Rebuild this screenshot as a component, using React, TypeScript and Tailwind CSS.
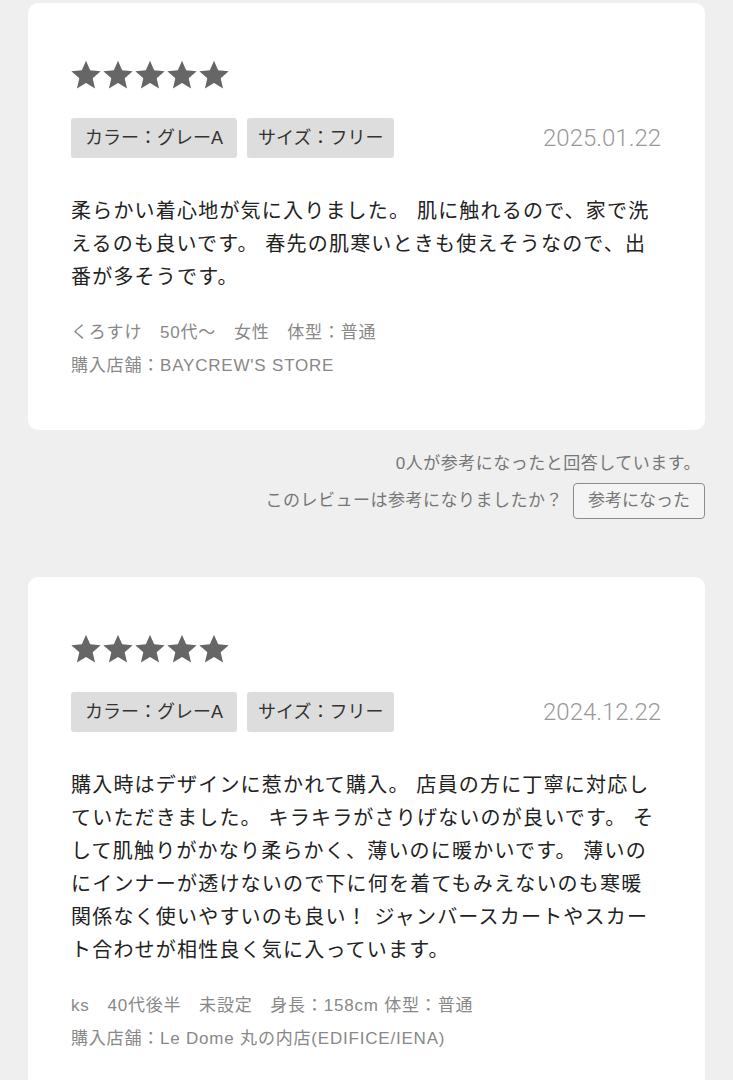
import React from "react";

type Review = {
  date: string;
  color: string;
  size: string;
  body: string;
  meta: string;
  store: string;
};

const reviews: Review[] = [
  {
    date: "2025.01.22",
    color: "カラー：グレーA",
    size: "サイズ：フリー",
    body: "柔らかい着心地が気に入りました。 肌に触れるので、家で洗えるのも良いです。 春先の肌寒いときも使えそうなので、出番が多そうです。",
    meta: "くろすけ　50代〜　女性　体型：普通",
    store: "購入店舗：BAYCREW'S STORE",
  },
  {
    date: "2024.12.22",
    color: "カラー：グレーA",
    size: "サイズ：フリー",
    body: "購入時はデザインに惹かれて購入。 店員の方に丁寧に対応していただきました。 キラキラがさりげないのが良いです。 そして肌触りがかなり柔らかく、薄いのに暖かいです。 薄いのにインナーが透けないので下に何を着てもみえないのも寒暖関係なく使いやすいのも良い！ ジャンバースカートやスカート合わせが相性良く気に入っています。",
    meta: "ks　40代後半　未設定　身長：158cm 体型：普通",
    store: "購入店舗：Le Dome 丸の内店(EDIFICE/IENA)",
  },
];

const Star = () => (
  <svg width="32" height="30" viewBox="0 0 24 22.5" className="shrink-0">
    <path
      d="M12 0.5l3.1 7.2 7.9 0.7-6 5.2 1.8 7.7L12 17.2l-6.8 4.1 1.8-7.7-6-5.2 7.9-0.7z"
      fill="#666666"
    />
  </svg>
);

const ReviewCard = ({ review }: { review: Review }) => (
  <div className="bg-white rounded-[10px] pl-[43px] pr-[44px] pt-[57px] pb-[48px]">
    <div className="flex h-[30px] -ml-[1px]">
      {[0, 1, 2, 3, 4].map((i) => (
        <Star key={i} />
      ))}
    </div>
    <div className="flex items-center mt-[28px]">
      <span className="bg-[#dddddd] rounded-[3px] px-[14px] h-[40px] flex items-center text-[18px] text-[#333333]">
        {review.color}
      </span>
      <span className="bg-[#dddddd] rounded-[3px] px-[11px] h-[40px] flex items-center text-[18px] text-[#333333] ml-[10px]">
        {review.size}
      </span>
      <span
        className="ml-auto text-[24px] font-light text-[#999999]"
        style={{ fontFamily: "Roboto, sans-serif" }}
      >
        {review.date}
      </span>
    </div>
    <p className="mt-[37px] text-[20px] leading-[33px] tracking-[1.2px] text-[#222222]">
      {review.body}
    </p>
    <div className="mt-[22px] text-[17px] leading-[33px] tracking-[0.8px] text-[#888888]">
      <div>{review.meta}</div>
      <div>{review.store}</div>
    </div>
  </div>
);

const Helpful = () => (
  <div className="flex flex-col items-end mt-[22px] mb-[58px] text-[17px] text-[#777777]">
    <div className="leading-[24px] pr-[4px] tracking-[0.5px]">0人が参考になったと回答しています。</div>
    <div className="flex items-center mt-[7px]">
      <span className="tracking-[0.5px]">このレビューは参考になりましたか？</span>
      <button className="ml-[10px] h-[36px] px-[14px] border-[1.5px] border-[#8c8c8c] rounded-[4px] bg-[#f4f4f4] text-[17px] text-[#777777]">
        参考になった
      </button>
    </div>
  </div>
);

export default function App() {
  return (
    <div
      className="min-h-screen bg-[#efefef] px-[28px] pt-[3px] overflow-hidden"
      style={{ fontFamily: '"Liberation Sans", "Noto Sans CJK JP", sans-serif' }}
    >
      <ReviewCard review={reviews[0]} />
      <Helpful />
      <ReviewCard review={reviews[1]} />
    </div>
  );
}
